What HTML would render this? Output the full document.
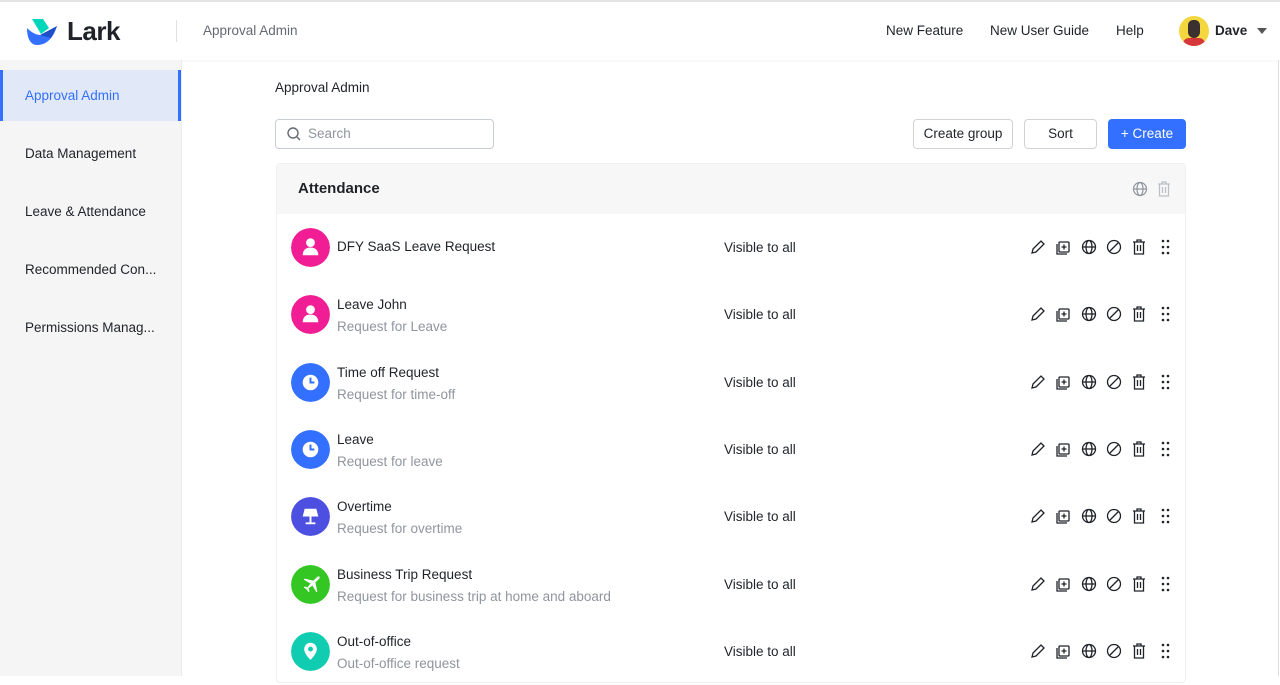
<!DOCTYPE html>
<html><head><meta charset="utf-8"><style>
*{box-sizing:border-box;margin:0;padding:0}
body{width:1280px;height:676px;overflow:hidden;font-family:"Liberation Sans",Arial,sans-serif;background:#fff;color:#1f2329;position:relative}
.hdr{position:absolute;top:0;left:0;width:1280px;height:60px;border-top:2px solid #e4e4e4;background:#fff;box-shadow:0 1px 3px rgba(0,0,0,.05)}
.side{position:absolute;top:60px;left:0;width:182px;height:616px;background:#f5f5f5;border-right:1px solid #eaeaea}
.side div{height:51px;line-height:51px;padding-left:25px;font-size:13.5px;color:#1f2329;margin-top:7px}
.side .act{margin-top:10px;background:#e1e8f7;color:#3370ff;border-left:3px solid #3370ff;border-right:3px solid #3370ff;padding-left:22px}
.btn{position:absolute;top:119px;height:30px;border:1px solid #d0d3d6;border-radius:4px;font-size:13.5px;line-height:28px;text-align:center;background:#fff}
.card{position:absolute;left:276px;top:163px;width:910px;height:520px;border:1px solid #f0f0f0;border-radius:4px}
.ch{height:50px;background:#f7f7f7;padding-left:21px;line-height:50px;font-size:15px;font-weight:bold;position:relative}
.row{position:absolute;left:0;width:908px;height:67px}
.av{position:absolute;left:14px;top:14px;width:39px;height:39px;border-radius:50%}
.t1{position:absolute;left:60px;font-size:13.5px;color:#1f2329}
.t2{position:absolute;left:60px;top:38px;font-size:13.5px;color:#8f959e}
.vis{position:absolute;left:447px;top:26px;font-size:13.5px}
.ic{position:absolute;top:25px;left:753px}
</style></head><body>
<div class="hdr">
 <svg style="position:absolute;left:26px;top:15px" width="36" height="30" viewBox="0 0 36 30"><path d="M6 2h11l6 9-8 6z" fill="#00d6b9"/><path d="M1 11c6 6 13 9 20 6l10-8c-3 10-9 19-20 19C5 28 1 22 1 11z" fill="#3370ff"/><path d="M14 18l17-9-6 12z" fill="#1e4fc9"/></svg>
 <div style="position:absolute;left:67px;top:14px;font-size:26px;font-weight:bold;letter-spacing:-0.5px">Lark</div>
 <div style="position:absolute;left:176px;top:18px;width:1px;height:22px;background:#e0e0e0"></div>
 <div style="position:absolute;left:203px;top:21px;font-size:13.5px;color:#646a73">Approval Admin</div>
 <div style="position:absolute;left:886px;top:21px;font-size:13.5px">New Feature</div>
 <div style="position:absolute;left:990px;top:21px;font-size:13.5px">New User Guide</div>
 <div style="position:absolute;left:1116px;top:21px;font-size:13.5px">Help</div>
 <div style="position:absolute;left:1179px;top:14px;width:30px;height:30px;border-radius:50%;background:#f4d73e;overflow:hidden"><div style="position:absolute;left:9px;top:4px;width:12px;height:18px;background:#3a3030;border-radius:5px 5px 6px 6px"></div><div style="position:absolute;left:4px;top:22px;width:22px;height:10px;background:#d6363a;border-radius:6px 6px 0 0"></div></div>
 <div style="position:absolute;left:1215px;top:21px;font-size:13.5px;font-weight:bold">Dave</div>
 <div style="position:absolute;left:1257px;top:26px;border:5px solid transparent;border-top:6px solid #555"></div>
</div>
<div class="side">
 <div class="act">Approval Admin</div>
 <div>Data Management</div>
 <div>Leave &amp; Attendance</div>
 <div>Recommended Con...</div>
 <div>Permissions Manag...</div>
</div>
<div style="position:absolute;left:275px;top:80px;font-size:13.5px">Approval Admin</div>
<div style="position:absolute;left:275px;top:119px;width:219px;height:30px;border:1px solid #c9cdd4;border-radius:4px">
 <svg style="position:absolute;left:11px;top:7px" width="14" height="14" viewBox="0 0 14 14" fill="none" stroke="#646a73" stroke-width="1.4"><circle cx="6" cy="6" r="5"/><path d="M10 10l3 3"/></svg>
 <span style="position:absolute;left:32px;top:6px;font-size:13.5px;color:#8f959e">Search</span></div>
<div class="btn" style="left:913px;width:100px">Create group</div>
<div class="btn" style="left:1024px;width:73px">Sort</div>
<div class="btn" style="left:1108px;width:78px;background:#3370ff;border-color:#3370ff;color:#fff">+ Create</div>
<div class="card">
 <div class="ch">Attendance
  <svg style="position:absolute;left:855px;top:17px" width="16" height="16" viewBox="0 0 16 16" fill="none" stroke="#8f959e" stroke-width="1.2"><circle cx="8" cy="8" r="6.5"/><ellipse cx="8" cy="8" rx="3" ry="6.5"/><path d="M1.5 8h13"/></svg>
  <svg style="position:absolute;left:880px;top:17px" width="14" height="16" viewBox="0 0 14 16" fill="none" stroke="#bbbfc4" stroke-width="1.2"><path d="M1 3h12M5 3V1h4v2M2.5 3v12h9V3M5.5 6v6M8.5 6v6"/></svg>
 </div>
 <div id="rows"></div>
</div>
<script>
var data=[["#f01d94","DFY SaaS Leave Request","","p"],["#f01d94","Leave John","Request for Leave","p"],["#3370ff","Time off Request","Request for time-off","c"],["#3370ff","Leave","Request for leave","c"],["#4c4fe0","Overtime","Request for overtime","l"],["#34c724","Business Trip Request","Request for business trip at home and aboard","a"],["#10ccb0","Out-of-office","Out-of-office request","m"]];
var icons={p:'<circle cx="20" cy="15" r="4.5" fill="#fff"/><path d="M12 28c0-6 4-8 8-8s8 2 8 8z" fill="#fff"/>',c:'<circle cx="20" cy="20" r="8" fill="#fff"/><path d="M20 15v5h4" stroke="#3370ff" stroke-width="2" fill="none"/>',l:'<path d="M14 12h12l2 8H12z" fill="#fff"/><path d="M20 20v7M15 27h10" stroke="#fff" stroke-width="2"/>',a:'<path d="M27 12l-4 4-9-2-1 1 7 4-3 4-3-1-1 1 3 2 2 3 1-1-1-3 4-3 4 7 1-1-2-9 4-4c1-2 0-3-2-2z" fill="#fff"/>',m:'<path d="M20 11a6.5 6.5 0 016.5 6.5c0 5-6.5 11-6.5 11s-6.5-6-6.5-11A6.5 6.5 0 0120 11z" fill="#fff"/><circle cx="20" cy="17.5" r="2.5" fill="#10ccb0"/>'};
var act='<svg width="150" height="16" viewBox="0 0 150 16" fill="none" stroke="#1f2329" stroke-width="1.3"><path d="M2 14l1-4 8-8 3 3-8 8z"/><rect x="29" y="3" width="10" height="10" rx="1"/><path d="M27 5v10h10M34 5.5v5M31.5 8h5"/><g transform="translate(51,0)"><circle cx="8" cy="8" r="6.5"/><ellipse cx="8" cy="8" rx="3" ry="6.5"/><path d="M1.5 8h13"/></g><g transform="translate(76,0)"><circle cx="8" cy="8" r="6.5"/><path d="M3.5 12.5l9-9"/></g><g transform="translate(102,0)"><path d="M1 3h12M5 3V1h4v2M2.5 3v12h9V3M5.5 6v6M8.5 6v6"/></g><g fill="#1f2329" stroke="none"><circle cx="133" cy="2" r="1.3"/><circle cx="138" cy="2" r="1.3"/><circle cx="133" cy="8" r="1.3"/><circle cx="138" cy="8" r="1.3"/><circle cx="133" cy="14" r="1.3"/><circle cx="138" cy="14" r="1.3"/></g></svg>';
var h='';data.forEach(function(d,i){var top=50+i*67.3;h+='<div class="row" style="top:'+top+'px"><svg class="av" viewBox="0 0 40 40"><circle cx="20" cy="20" r="20" fill="'+d[0]+'"/>'+icons[d[3]]+'</svg><div class="t1" style="top:'+(d[2]?16:25)+'px">'+d[1]+'</div>'+(d[2]?'<div class="t2">'+d[2]+'</div>':'')+'<div class="vis">Visible to all</div><div class="ic">'+act+'</div></div>';});
document.getElementById('rows').innerHTML=h;
</script>
<div style="position:absolute;left:1278px;top:60px;width:1px;height:616px;background:#ddd"></div>
</body></html>
